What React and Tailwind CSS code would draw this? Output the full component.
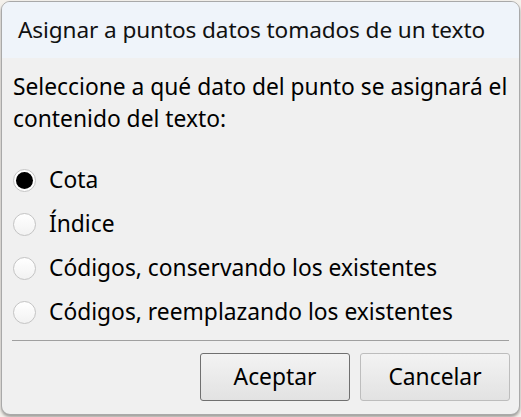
export default function App() {
  const options = [
    { label: "Cota", checked: true },
    { label: "Índice", checked: false },
    { label: "Códigos, conservando los existentes", checked: false },
    { label: "Códigos, reemplazando los existentes", checked: false },
  ];
  return (
    <div className="w-[521px] h-[417px] bg-[#f4f1ec] overflow-hidden" style={{ fontFamily: '"Noto Sans", "Open Sans", sans-serif' }}>
      <div className="ml-[1px] mt-[1px] w-[519px] h-[414px] rounded-[9px] border border-[#a9a9a9] bg-[#f0f0f0] overflow-hidden flex flex-col shadow-[0_2px_3px_rgba(0,0,0,0.35)]">
        <div className="h-[56px] shrink-0 bg-[#eff4fa] flex items-center pl-[16px] text-[22.6px] text-[#111] tracking-[-0.1px]">
          Asignar a puntos datos tomados de un texto
        </div>
        <div className="pl-[11px] pt-[13px] text-[22.8px] leading-[32px] text-black">
          <div>Seleccione a qué dato del punto se asignará el</div>
          <div>contenido del texto:</div>
        </div>
        <div className="mt-[34px] flex flex-col gap-[22px] pl-[11px]">
          {options.map((o) => (
            <div key={o.label} className="flex items-center h-[22px] gap-[13px]">
              {o.checked ? (
                <div className="w-[23px] h-[23px] shrink-0 rounded-full border border-[#c4c4c4] bg-white flex items-center justify-center">
                  <div className="w-[17px] h-[17px] rounded-full bg-black" />
                </div>
              ) : (
                <div className="w-[23px] h-[23px] shrink-0 rounded-full border border-[#c4c4c4] bg-gradient-to-b from-white to-[#f2f2f2]" />
              )}
              <span className="text-[22.8px] text-black whitespace-nowrap">{o.label}</span>
            </div>
          ))}
        </div>
        <div className="mt-[17px] mx-[10px] h-[1px] shrink-0 bg-[#a0a0a0]" />
        <div className="mt-[12px] flex justify-end gap-[10px] pr-[9px]">
          <button className="w-[150px] h-[48px] rounded-[3px] border border-[#707070] bg-gradient-to-b from-[#f3f3f3] to-[#e2e2e2] text-[22.8px] text-black">
            Aceptar
          </button>
          <button className="w-[150px] h-[48px] rounded-[3px] border border-[#bdbdbd] bg-gradient-to-b from-[#f3f3f3] to-[#e2e2e2] text-[22.8px] text-black">
            Cancelar
          </button>
        </div>
      </div>
    </div>
  );
}
